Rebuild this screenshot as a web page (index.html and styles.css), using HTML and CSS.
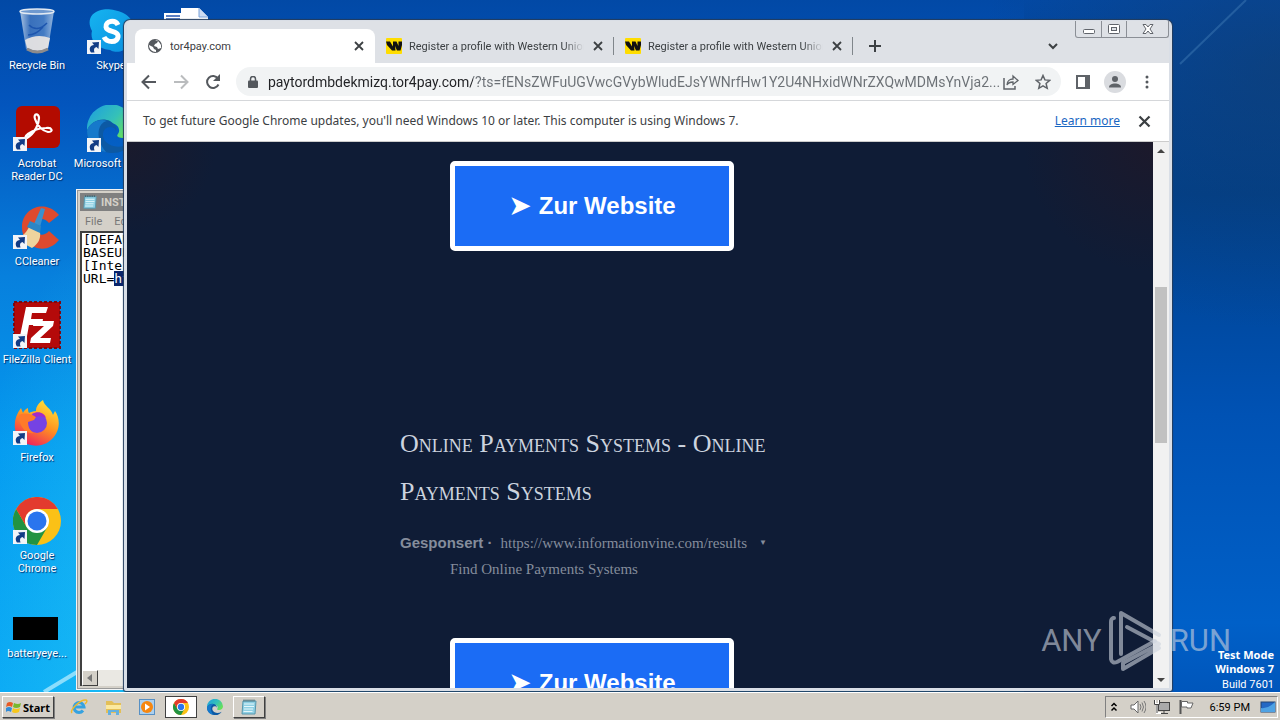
FILE: index.html
```html
<!DOCTYPE html>
<html lang="en">
<head>
<meta charset="utf-8">
<meta name="viewport" content="width=device-width, initial-scale=1">
<title>tor4pay.com</title>
<link rel="stylesheet" href="styles.css">
</head>
<body>
<svg class="defs" width="0" height="0" aria-hidden="true">
  <defs>
    <linearGradient id="gSkype" x1="0" y1="0" x2="1" y2="1"><stop offset="0" stop-color="#16b4f0"/><stop offset="1" stop-color="#0a8fe0"/></linearGradient>
    <linearGradient id="gFox" x1="0.8" y1="0" x2="0.3" y2="1"><stop offset="0" stop-color="#ffe83a"/><stop offset="0.5" stop-color="#ff9420"/><stop offset="1" stop-color="#ef1f5e"/></linearGradient>
    <linearGradient id="gEdge" x1="0" y1="0" x2="1" y2="0.6"><stop offset="0" stop-color="#1b9de2"/><stop offset="0.6" stop-color="#35c1b8"/><stop offset="1" stop-color="#66e05a"/></linearGradient>
    <linearGradient id="gBin" x1="0" y1="0" x2="1" y2="0"><stop offset="0" stop-color="#b9cfe8"/><stop offset="0.3" stop-color="#3f74bd"/><stop offset="0.7" stop-color="#4a80c6"/><stop offset="1" stop-color="#a5c2e4"/></linearGradient>
    <symbol id="shortcut" viewBox="0 0 14 14"><rect width="14" height="14" fill="#f2f4f8"/><path d="M4 12.500C1.500 9 3 5 7 5L5 2.500 12 2l-.5 7-2-2C7 7.500 6.500 9.500 7.500 12.500z" fill="#123c85"/></symbol>
    <symbol id="chrome" viewBox="0 0 48 48">
      <circle cx="24" cy="24" r="24" fill="#fbc116"/>
      <path d="M3.200 12A24 24 0 0 0 24 48L34.400 30 24 24 13.600 30z" fill="#229342"/>
      <path d="M3.200 12A24 24 0 0 1 44.800 12H24A12 12 0 0 0 13.600 30z" fill="#e33b2e"/>
      <circle cx="24" cy="24" r="12" fill="#fff"/><circle cx="24" cy="24" r="9.500" fill="#2a75ee"/>
    </symbol>
    <symbol id="edge" viewBox="0 0 48 48">
      <path d="M0 25A24 24 0 0 1 48 22c0 7-5 11-12 11-5 0-7-2-5-4 3-4 0-11-8-11-9 0-19 6-23 7z" fill="url(#gEdge)"/>
      <path d="M0 26C3 16 15 12 23 16c5 3 7 7 6 10-1-3-3-4-6-4-8 0-9 10-4 15 6 6 16 6 25 1-5 7-11 10-18 10C11 48 0 38 0 26z" fill="#0c59a4"/>
      <path d="M0 26C2 18 12 13 20 16 10 18 8 34 19 47 8 46 0 37 0 26z" fill="#1679cb"/>
    </symbol>
    <symbol id="note" viewBox="0 0 18 18"><path d="M3 3h13l-1 13H2z" fill="#8fd0e4" stroke="#5696ad"/><path d="M4 6h10M4 8.500h10M4 11h9M3.500 13.500h9" stroke="#e4f7fb"/><path d="M3.500 2.500h12" stroke="#43646e" stroke-width="2" stroke-dasharray="1 1"/></symbol>
    <symbol id="wu" viewBox="0 0 16 16"><rect width="16" height="16" rx="1" fill="#ffdd00"/><path d="M0 3.500h4l3 5v-5h3.500l2 4.500V3.500H16V7l-1.500 5.500H11L9 8l.5 4.500H6L1 7z" fill="#111"/></symbol>
    <symbol id="cross" viewBox="0 0 12 12"><path d="M2 2l8 8M10 2l-8 8" stroke="currentColor" stroke-width="1.800"/></symbol>
  </defs>
</svg>
<main class="desktop">
  <svg class="rays" viewBox="0 0 1280 692" preserveAspectRatio="none" aria-hidden="true">
    <path d="M44 692 130 640" stroke="#bdf0ff" stroke-opacity=".7" stroke-width="4"/>
    <path d="M1180 64 1246 0" stroke="#4b87bd" stroke-opacity=".4" stroke-width="2"/>
  </svg>
  <ul class="icons">
    <li class="icon"><svg viewBox="0 0 48 48"><path d="M7 4 13 42q10 6 22 0L41 4z" fill="url(#gBin)" fill-opacity=".9"/><path d="M12 33q12-7 25-2l-2 10q-10 6-21 0z" fill="#eee9e4" fill-opacity=".9"/><path d="M14 42q10 6 21 0" fill="none" stroke="#8d8b8b" stroke-width="3"/><ellipse cx="24" cy="4.500" rx="17" ry="2.500" fill="#6f99cf" stroke="#e1e9f2" stroke-width="1.500"/><path d="M16 18q8 8 18-2M15 28q8 0 15-8" stroke="#1d55ae" stroke-width="1.500" fill="none"/></svg><span>Recycle Bin</span></li>
    <li class="icon"><svg viewBox="0 0 48 48"><rect x="3" y="1" width="44" height="42" rx="6" fill="#b30b00"/><path d="M14 33c8-5 12-14 12-20 0-5-6-5-4 1 2 7 8 12 13 13 6 0 4-5-2-4-8 0-14 3-18 6-4 3-3 5-1 4z" fill="none" stroke="#fff" stroke-width="2.200"/><use href="#shortcut" y="32" width="14" height="14"/></svg><span>Acrobat<br>Reader DC</span></li>
    <li class="icon"><svg viewBox="0 0 48 48"><path d="M46 12C33-4 9 4 9 24s23 30 37 13L36 28c-6 7-15 3-15-4s9-12 15-4z" fill="#de4a2e"/><path d="M28 5l4 1-5 18-6-3z" fill="#3a91cf"/><path d="M16 24l11 5c1 7-2 12-8 16L2 36C9 34 13 30 16 24z" fill="#efd49d"/><path d="M17 18l11 5-1 7-13-6z" fill="#2b86c6"/><use href="#shortcut" y="32" width="14" height="14"/></svg><span>CCleaner</span></li>
    <li class="icon"><svg viewBox="0 0 48 48"><rect x="1" y="1" width="46" height="46" fill="#b40a0a" stroke="#7c0810" stroke-width="2" stroke-dasharray="3 2"/><path d="M13 6h22l-2 6H19l-1 6h12l-1 6H16l-2 11H7z" fill="#fff"/><path d="M21 20h20l-1 5-13 12h11l-1 5H17l1-5 13-12H20z" fill="#fff"/><use href="#shortcut" y="33" width="14" height="14"/></svg><span>FileZilla Client</span></li>
    <li class="icon"><svg viewBox="0 0 48 48"><path d="M30 1c-6 4-7 8-7 11-3 0-5 1-7 2-1-2-1-3-1-5-3 1-4 3-5 5L8 9C0 19-1 34 9 42c8 6 21 7 30-2 9-9 8-21 3-28l-2 4C38 9 31 7 30 1z" fill="url(#gFox)"/><circle cx="24" cy="24" r="10" fill="#7542e4"/><path d="M6 16c7-3 12-1 17 2l-2 3-6 2c0 5 2 9 6 11-8 2-16-8-15-18z" fill="#ff7a2a"/><path d="M19 15c6-4 13-1 14 4-4-2-7-2-10-1z" fill="#a329c8"/><use href="#shortcut" y="32" width="14" height="14"/></svg><span>Firefox</span></li>
    <li class="icon"><svg viewBox="0 0 48 48"><use href="#chrome" width="48" height="48"/><use href="#shortcut" y="33" width="14" height="14"/></svg><span>Google<br>Chrome</span></li>
    <li class="icon"><svg viewBox="0 0 48 48"><rect y="22" width="45" height="23"/></svg><span>batteryeye...</span></li>
    <li class="icon"><svg viewBox="0 0 48 48"><path d="M14 3C22 0 44 5 45 16c4 9 3 20-8 27-8 4-14 0-14 0C7 41 3 31 5 24-1 13 5 5 14 3z" fill="url(#gSkype)"/><path d="M31 18c-3-6-13-4-12 2 1 6 13 3 12 10-1 6-11 6-14 0" fill="none" stroke="#fff" stroke-width="5"/><use href="#shortcut" y="33" width="14" height="14"/></svg><span>Skype</span></li>
    <li class="icon"><svg viewBox="0 0 48 48"><use href="#edge" width="48" height="48"/><use href="#shortcut" y="33" width="14" height="14"/></svg><span>Microsoft Edge</span></li>
    <li class="icon third"><svg viewBox="0 0 48 48"><path d="M20 1h18l9 9v37H20z" fill="#fff"/><path d="M38 1v9h9" fill="#cddcf2" stroke="#7ba2d9"/><rect x="3" y="6" width="19" height="18" fill="#fff"/><path d="M5 9h14M5 12h14" stroke="#5b7fc4" stroke-width="2"/></svg></li>
  </ul>

  <section class="notepad" aria-label="Notepad">
    <div class="np-title"><svg viewBox="0 0 18 18"><use href="#note"/></svg>INSTALL</div>
    <nav class="np-menu"><button>File</button><button>Edit</button></nav>
    <div class="np-text">[DEFAULT]<br>BASEURL=<br>[InternetShortcut]<br>URL=<mark>https</mark></div>
    <div class="np-scroll"><button aria-label="Scroll left"><svg viewBox="0 0 8 8"><path d="M6 0v8L1 4z" fill="#777"/></svg></button></div>
  </section>

  <section class="chrome" aria-label="Browser">
    <header class="tabs">
      <div class="tab active"><svg class="fav" viewBox="0 0 16 16"><circle cx="8" cy="8" r="7" fill="#54585d"/><path d="M2 7l4 2 1 2 2 1v2c-4 0-7-3-7-7zM8 2l3 1-1 2-2 1-1 2 3 1 1 2 3-1 0-3-2-3-2-2z" fill="#fff"/></svg><span>tor4pay.com</span><button aria-label="Close tab"><svg viewBox="0 0 12 12"><use href="#cross"/></svg></button></div>
      <div class="tab"><svg class="fav" viewBox="0 0 16 16"><use href="#wu"/></svg><span class="fade">Register a profile with Western Union</span><button aria-label="Close tab"><svg viewBox="0 0 12 12"><use href="#cross"/></svg></button></div>
      <div class="tab"><svg class="fav" viewBox="0 0 16 16"><use href="#wu"/></svg><span class="fade">Register a profile with Western Union</span><button aria-label="Close tab"><svg viewBox="0 0 12 12"><use href="#cross"/></svg></button></div>
      <button class="new" aria-label="New tab"><svg viewBox="0 0 12 12"><path d="M6 0v12M0 6h12" stroke="#3c4043" stroke-width="2"/></svg></button>
      <button class="search" aria-label="Search tabs"><svg viewBox="0 0 12 12"><path d="M2 4l4 4 4-4" fill="none" stroke="#3c4043" stroke-width="2"/></svg></button>
      <div class="winbtns">
        <button aria-label="Minimize"><svg viewBox="0 0 14 12"><rect x="1.500" y="6.500" width="11" height="4" rx="1" fill="#fff" stroke="#60646b"/></svg></button>
        <button aria-label="Maximize"><svg viewBox="0 0 14 12"><rect x="1.500" y="1.500" width="11" height="9" rx="1" fill="#fff" stroke="#60646b"/><rect x="4.500" y="4.500" width="5" height="3" fill="#dee1e6" stroke="#60646b"/></svg></button>
        <button aria-label="Close"><svg viewBox="0 0 14 12"><path d="M2 1.500h3l2 2.500 2-2.500h3L9 6l3 4.500H9L7 8l-2 2.500H2L5 6z" fill="#fff" stroke="#60646b"/></svg></button>
      </div>
    </header>
    <div class="toolbar">
      <button aria-label="Back"><svg viewBox="0 0 16 16"><path d="M15 8H2M8 1.500 1.500 8 8 14.500" fill="none" stroke="#54585d" stroke-width="2"/></svg></button>
      <button aria-label="Forward"><svg viewBox="0 0 16 16"><path d="M1 8h13M8 1.500 14.500 8 8 14.500" fill="none" stroke="#babcbe" stroke-width="2"/></svg></button>
      <button aria-label="Reload"><svg viewBox="0 0 16 16"><path d="M13.500 10.500A6 6 0 1 1 13 4.500" fill="none" stroke="#54585d" stroke-width="2"/><path d="M15 0v7H8z" fill="#54585d"/></svg></button>
      <div class="omnibox">
        <svg class="lock" viewBox="0 0 10 12"><rect y="4.500" width="10" height="7.500" rx="1" fill="#54585d"/><path d="M2.500 5V3a2.500 2.500 0 0 1 5 0v2" fill="none" stroke="#54585d" stroke-width="1.500"/></svg>
        <input class="url" type="text" aria-label="Address" value="paytordmbdekmizq.tor4pay.com/?ts=fENsZWFuUGVwcGVybWludEJsYWNrfHw1Y2U4NHxidWNrZXQwMDMsYnVja2...">
        <button aria-label="Share"><svg viewBox="0 0 16 16"><path d="M1 4v11h11v-3" fill="none" stroke="#5f6368" stroke-width="1.500"/><path d="M4 11c0-4 3-6 6-6V2l5 4.500-5 4V8c-3 0-5 1-6 3z" fill="none" stroke="#5f6368" stroke-width="1.300"/></svg></button>
        <button aria-label="Bookmark"><svg viewBox="0 0 16 16"><path d="M8 1.500l1.900 4.400 4.800.4-3.600 3.200 1.100 4.800L8 11.800l-4.200 2.500 1.100-4.800L1.300 6.300l4.800-.4z" fill="none" stroke="#5f6368" stroke-width="1.500"/></svg></button>
      </div>
      <button aria-label="Side panel"><svg viewBox="0 0 16 16"><rect x="2" y="2" width="12" height="12" fill="#fff" stroke="#5f6368" stroke-width="2"/><path d="M10 2h5v12h-5z" fill="#5f6368"/></svg></button>
      <button class="avatar" aria-label="Profile"><svg viewBox="0 0 16 16"><circle cx="8" cy="5" r="3" fill="#5f6368"/><path d="M2 13.500C2 10.500 5 9.500 8 9.500s6 1 6 4z" fill="#5f6368"/></svg></button>
      <button aria-label="Menu"><svg viewBox="0 0 16 16"><g fill="#54585d"><circle cx="8" cy="3" r="1.500"/><circle cx="8" cy="8" r="1.500"/><circle cx="8" cy="13" r="1.500"/></g></svg></button>
    </div>
    <div class="infobar"><p>To get future Google Chrome updates, you'll need Windows 10 or later. This computer is using Windows 7.</p><a href="#">Learn more</a><button aria-label="Dismiss"><svg viewBox="0 0 12 12"><use href="#cross"/></svg></button></div>
    <div class="view">
      <div class="page">
        <article class="ads">
          <button class="cta"><span class="arrow">➤</span>Zur Website</button>
          <h2>Online Payments Systems - Online Payments Systems</h2>
          <p class="source"><b>Gesponsert ·</b><a href="#">https://www.informationvine.com/results</a><small>▼</small></p>
          <p class="desc">Find Online Payments Systems</p>
          <button class="cta"><span class="arrow">➤</span>Zur Website</button>
        </article>
      </div>
      <div class="scrollbar"><button aria-label="Scroll up"><svg viewBox="0 0 8 4"><path d="M0 4l4-4 4 4z" fill="#444"/></svg></button><div class="track"><div class="thumb"></div></div><button aria-label="Scroll down"><svg viewBox="0 0 8 4"><path d="M0 0l4 4 4-4z" fill="#444"/></svg></button></div>
    </div>
  </section>

  <div class="anyrun"><span>ANY</span><svg viewBox="0 0 54 62" aria-hidden="true"><g fill="none" stroke="currentColor" stroke-width="4" stroke-linejoin="round" stroke-linecap="round"><path d="M5 8H4Q2 9 2 12V49Q3 54 8 52L46 31"/><path d="M12 44V3L50 25M18 17 50 34 14 53V59L50 38"/></g></svg><span>RUN</span></div>
  <div class="mode"><b>Test Mode</b><b>Windows 7</b><span>Build 7601</span></div>
</main>

<footer class="taskbar">
  <button class="start"><svg viewBox="0 0 16 16"><path d="M1 4q3-2 6 0L6 8Q3 6 0 8z" fill="#e85a24"/><path d="M8 4q4 2 7 0l-1 4q-4 2-7 0z" fill="#79b82c"/><path d="M0 9q3-2 6 0l-1 4q-3-2-5 0z" fill="#328cd8"/><path d="M7 9q3 2 7 0l-1 4q-4 2-7 0z" fill="#f7c71c"/></svg>Start</button>
  <button class="quick" aria-label="Internet Explorer"><svg viewBox="0 0 18 18"><path d="M4 9h10a5 5 0 1 0-1 3.500" fill="none" stroke="#35a2e0" stroke-width="3"/><path d="M2 15C-1 12 11 1 16 2c2 1 0 3-1 4" fill="none" stroke="#efb92b" stroke-width="1.500"/></svg></button>
  <button class="quick" aria-label="Explorer"><svg viewBox="0 0 18 18"><path d="M2 3h6l2 2h7v10H2z" fill="#e3bf58"/><path d="M2 7h15v4H2z" fill="#fbe9a0"/><path d="M4 17v-5h11v5h-3v-3H7v3z" fill="#64b0df"/></svg></button>
  <button class="quick" aria-label="Media Player"><svg viewBox="0 0 18 18"><rect x="1.500" y="1.500" width="15" height="15" fill="#acd0ee" stroke="#5790c4"/><circle cx="9" cy="9" r="6" fill="#f68710"/><path d="M7 5.500v7l5-3.500z" fill="#fff"/></svg></button>
  <button class="quick pressed" aria-label="Chrome"><svg viewBox="0 0 48 48"><use href="#chrome"/></svg></button>
  <button class="quick" aria-label="Edge"><svg viewBox="0 0 48 48"><use href="#edge"/></svg></button>
  <button class="quick raised" aria-label="Notepad"><svg viewBox="0 0 18 18"><use href="#note"/></svg></button>
  <div class="tray">
    <svg viewBox="0 0 16 16"><path d="M5.500 7 8 4.500 10.500 7M5.500 11.500 8 9l2.500 2.500" fill="none" stroke="#000" stroke-width="1.500"/></svg>
    <svg viewBox="0 0 16 16"><path d="M1 6h3l4-4v12l-4-4H1z" fill="#fff" stroke="#666"/><path d="M10 5q2 3 0 6M12 3.500q3 4.500 0 9M14 2q4 6 0 12" fill="none" stroke="#777"/></svg>
    <svg viewBox="0 0 16 16"><rect x="4.500" y="3.500" width="11" height="8" fill="#aaa" stroke="#444"/><path d="M7 14.500h7M10 12v2" stroke="#444"/><path d="M1 1v4h4V1M3 5v9h4" fill="none" stroke="#fff" stroke-width="2"/><path d="M.5 1v4.500h5V1M3 6v8" fill="none" stroke="#444"/></svg>
    <svg viewBox="0 0 16 16"><path d="M2.500 1v14" stroke="#555" stroke-width="2"/><path d="M3.500 2.500h6V4H15l-2 5H9V8H3.500z" fill="#fff" stroke="#666"/></svg>
    <time>6:59 PM</time>
    <svg viewBox="0 0 16 16"><rect x="1" y="3" width="14" height="10" fill="#2468c4" stroke="#224271"/><path d="M1 9q7 1 14-6v10H1z" fill="#4fa2e3"/></svg>
  </div>
</footer>
</body>
</html>
```
FILE: styles.css
```css
* { box-sizing: border-box; }
body {
  margin: 0; height: 100vh; display: flex; flex-direction: column; overflow: hidden;
  font: 11px/13px Roboto, "Noto Sans", sans-serif; color: #000;
}
b { font-family: "Noto Sans", sans-serif; }
button { font: inherit; border: 0; padding: 0; background: none; color: inherit; display: flex; align-items: center; justify-content: center; flex: none; }
svg { display: block; flex: none; }
p, h2, ul { margin: 0; padding: 0; }
.defs { position: absolute; }

.desktop {
  position: relative; flex: 1; min-height: 0; overflow: hidden;
  background:
    radial-gradient(ellipse 160px 400px at 10% 90%, rgba(50,220,245,.4), transparent),
    radial-gradient(ellipse 300px 260px at 100% 10%, rgba(20,60,105,.55), transparent),
    linear-gradient(#0249a6, #00408c 28%, #0052b4 60%, #0060c8 90%, #0056bb) right / 20% 100% no-repeat,
    linear-gradient(#0249a6, #0355bd 15%, #0780dd 40%, #049af0 65%, #0aa8f5);
}
.rays { position: absolute; inset: 0; width: 100%; height: 100%; }
.icons {
  position: relative; list-style: none; height: 100%; padding-top: 7px;
  display: grid; grid-template-rows: repeat(7, 98px); grid-auto-flow: column; grid-auto-columns: 74px; justify-content: start;
  color: #fff; text-align: center; text-shadow: 1px 1px 1px #003070;
}
.icon { display: flex; flex-direction: column; align-items: center; gap: 4px; white-space: nowrap; }
.icon svg { width: 48px; height: 48px; }
.third { grid-column: 3; }

.notepad {
  position: absolute; left: 76px; top: 189px; bottom: 2px; width: 400px; padding: 3px;
  background: #d4d0c8; border: 1px solid #f4f4f4; outline: 1px solid #999; outline-offset: -2px;
  display: flex; flex-direction: column;
}
.np-title { display: flex; align-items: center; gap: 3px; height: 18px; padding-left: 2px; background: #808080; color: #d4d0c8; font-weight: bold; }
.np-title svg { width: 16px; height: 16px; }
.np-menu { display: flex; gap: 12px; height: 20px; padding-left: 5px; color: #777; }
.np-text { flex: 1; padding: 0 1px; background: #fff; border: solid #404040; border-width: 2px 0 0 2px; font: 13px/13px "DejaVu Sans Mono", monospace; }
.np-text mark { background: #0a246a; color: #fff; }
.np-scroll { height: 16px; background: #eae8e3; border-left: 2px solid #404040; }
.np-scroll button { width: 16px; height: 16px; background: #d4d0c8; border: 1px solid #fff; border-right-color: #404040; border-bottom-color: #404040; }
.np-scroll svg { width: 8px; height: 8px; }

.chrome {
  position: absolute; left: 124px; right: 108px; top: 20px; bottom: 1px;
  display: flex; flex-direction: column; background: #dee1e6; color: #3c4043;
  border: solid #d9dee6; border-width: 1px 3px 3px; border-radius: 6px 6px 2px 2px; box-shadow: 0 0 1px 1px #243c5c;
}
.tabs { display: flex; height: 42px; padding: 8px 0 0 8px; }
.tab { flex: 0 1 239px; min-width: 0; display: flex; align-items: center; padding: 0 9px 0 11px; }
.tab.active { flex-basis: 240px; padding: 0 10px 0 12px; background: #fff; border-radius: 8px 8px 0 0; }
.tab:not(.active) { border-right: 1px solid; border-image: linear-gradient(transparent 25%, #80868b 25% 75%, transparent 75%) 1; }
.fav { width: 16px; height: 16px; margin-right: 7px; }
.tab span { flex: 1; overflow: hidden; white-space: nowrap; }
.fade { mask-image: linear-gradient(to right, #000 88%, transparent); }
.tab button { width: 12px; height: 12px; margin-left: 8px; }
.tab button svg { width: 12px; height: 12px; }
.new { width: 44px; } .new svg, .search svg { width: 12px; height: 12px; }
.search { width: 28px; margin-left: auto; margin-right: 8px; }
.winbtns { display: flex; align-self: flex-start; margin-top: -8px; height: 17px; border: 1px solid #8b8f96; border-top: 0; border-radius: 0 0 3px 3px; }
.winbtns button { width: 25px; } .winbtns button + button { border-left: 1px solid #8b8f96; }
.winbtns button:last-child { width: 42px; } .winbtns svg { width: 14px; height: 12px; }

.toolbar { display: flex; align-items: center; height: 38px; padding: 0 6px; background: #fff; border-bottom: 1px solid #d5d7da; }
.toolbar button { width: 32px; height: 28px; } .toolbar svg { width: 16px; height: 16px; }
.omnibox { flex: 1; min-width: 0; display: flex; align-items: center; height: 29px; margin: 0 6px 0 7px; padding: 0 8px 0 12px; background: #f1f3f4; border-radius: 15px; }
.toolbar .omnibox button { width: 20px; } .omnibox button + button { margin-left: 12px; }
.toolbar .lock { width: 10px; height: 12px; margin-right: 10px; }
.url {
  flex: 1; min-width: 0; padding: 0; border: 0; outline: 0; font: 14px/20px Roboto, sans-serif; text-overflow: ellipsis;
  background: linear-gradient(to right, #202124 205px, #6b7075 205px) text; -webkit-background-clip: text; -webkit-text-fill-color: transparent;
}
.toolbar .avatar { width: 22px; height: 22px; margin: 0 5px; border-radius: 50%; background: #dadce0; }
.infobar { display: flex; align-items: center; height: 41px; padding: 0 17px 0 16px; background: #fff; font: 12px/14px "Noto Sans", sans-serif; border-bottom: 1px solid #ccc; }
.infobar p { flex: 1; } .infobar a { color: #1a67c2; } .infobar button { margin-left: 17px; } .infobar svg { width: 15px; height: 15px; }

.view { flex: 1; min-height: 0; display: flex; }
.page { flex: 1; overflow: hidden; background: radial-gradient(circle at 0 0, #1a1a2c, transparent 90px), radial-gradient(circle at 100% 0, #1c192b, transparent 130px), #0f1c36; }
.ads { width: 480px; margin: 0 auto; padding-top: 19px; font: 15px/26px "Liberation Serif", serif; color: #858d9c; }
.cta { width: 284px; height: 90px; margin-left: 50px; gap: 7px; background: #1b6cf5; border: 5px solid #fff; border-radius: 5px; color: #fff; font: bold 24px "Liberation Sans", sans-serif; }
.arrow { font: 28px/28px "DejaVu Sans", sans-serif; }
.ads h2 { width: 400px; margin: 169px 0 14px; font: 26px/48px "Liberation Serif", serif; font-variant: small-caps; color: #ccd3df; }
.source { display: flex; align-items: center; gap: 8px; }
.source b { font: bold 15px/26px "Liberation Sans", sans-serif; }
.source a { color: inherit; text-decoration: none; } .source small { font-size: 8px; margin-left: 4px; }
.desc { margin: 0 0 56px 50px; }
.scrollbar { width: 16px; display: flex; flex-direction: column; background: #f1f1f1; }
.scrollbar button { height: 17px; } .scrollbar svg { width: 8px; height: 4px; }
.track { flex: 1; padding: 128px 2px 0; } .thumb { height: 156px; background: #c1c1c1; }

.anyrun { position: absolute; right: 49px; bottom: 20px; height: 62px; display: flex; align-items: center; gap: 7px; color: rgba(205,211,222,.6); font: 31px/40px Roboto, sans-serif; }
.anyrun svg { width: 54px; height: 62px; }
.mode { position: absolute; right: 6px; bottom: 0; display: flex; flex-direction: column; text-align: right; color: #fff; line-height: 14px; }
.mode span { margin-top: 2px; }

.taskbar { height: 28px; display: flex; align-items: center; padding: 1px 2px 0; background: #d4d0c8; border-top: 1px solid #fff; }
.start, .raised { background: #d4d0c8; border: 1px solid #fff; border-right-color: #404040; border-bottom-color: #404040; box-shadow: 1px 1px 0 #808080; }
.start { width: 52px; height: 22px; margin-right: 9px; gap: 1px; font: bold 11px/13px "Noto Sans", sans-serif; }
.start svg { width: 16px; height: 16px; }
.quick { width: 32px; height: 22px; margin-right: 2px; } .quick svg { width: 18px; height: 18px; }
.quick.pressed { background: #fff; border: 1px solid #404040; }
.quick.pressed svg, .quick:nth-child(6) svg { width: 16px; height: 16px; }
.tray { margin-left: auto; height: 22px; padding: 0 1px 0 0; display: flex; align-items: center; gap: 8px; border: 1px solid #808080; border-right-color: #fff; border-bottom-color: #fff; }
.tray svg { width: 16px; height: 16px; } .tray time { margin: 0 2px 0 8px; font-size: 11px; }
```
